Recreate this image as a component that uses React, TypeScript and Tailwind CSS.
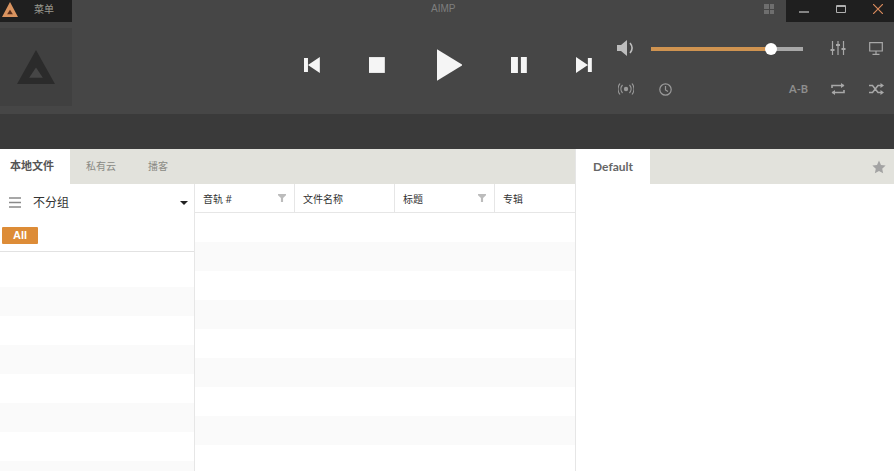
import React from "react";

const cjk = "font-['Open_Sans','Noto_Sans_CJK_SC',sans-serif]";

function Logo({ size, h, outer, inner }: { size: number; h: number; outer: string; inner: string }) {
  return (
    <svg width={size} height={h} viewBox="0 0 100 86" preserveAspectRatio="none">
      <path d="M50 0 L100 86 H0 Z" fill={outer} />
      <path d="M50 44 L68 70 H32 Z" fill={inner} />
    </svg>
  );
}

function Funnel() {
  return (
    <svg width="8" height="8" viewBox="0 0 9 9" className="shrink-0">
      <path d="M0 0 H9 V1.5 L5.7 4.5 V9 H3.3 V4.5 L0 1.5 Z" fill="#bcbcbc" />
    </svg>
  );
}

function HeaderCell({ label, width, filter, last }: { label: string; width: string; filter?: boolean; last?: boolean }) {
  return (
    <div className={`${width} h-full flex items-center justify-between pl-[8px] pr-[8px] ${last ? "" : "border-r border-[#e6e6e6]"}`}>
      <span className={`text-[10px] leading-[12px] mt-[2px] text-[#333] ${cjk}`}>{label}</span>
      {filter && <Funnel />}
    </div>
  );
}

function Rows({ count }: { count: number }) {
  return (
    <div className="flex-1 overflow-hidden">
      {Array.from({ length: count }).map((_, i) => (
        <div key={i} className={i % 2 === 0 ? "h-[29px] bg-white" : "h-[29px] bg-[#fafafa]"} />
      ))}
    </div>
  );
}

export default function App() {
  return (
    <div className={`w-[894px] h-[471px] overflow-hidden bg-white flex flex-col ${cjk}`}>
      {/* Player */}
      <div className="h-[114px] bg-[#464646] flex flex-col">
        <div className="h-[22px] flex">
          <div className="w-[72px] h-full bg-[#1f1f1f] flex items-center">
            <div className="ml-[2px] mb-[3px]">
              <Logo size={16} h={15} outer="#d9935f" inner="#5a2f1c" />
            </div>
            <span className="ml-[16px] mb-[3px] text-[10px] text-[#9a9a90]">菜单</span>
          </div>
          <span className="ml-[359px] pt-[2px] text-[10px] leading-[14px] text-[#7e7e7e] font-['Liberation_Sans',sans-serif]">AIMP</span>
          <div className="flex h-full ml-auto">
            <div className="mr-[12px] mt-[4px] grid grid-cols-2 gap-[1px] w-[10px] h-[10px]">
              <span className="bg-[#6e6e6e]" />
              <span className="bg-[#6e6e6e]" />
              <span className="bg-[#6e6e6e]" />
              <span className="bg-[#6e6e6e]" />
            </div>
            <div className="w-[108px] h-full bg-[#1f1f1f] flex items-start">
              <svg width="10" height="2" viewBox="0 0 10 2" className="ml-[13px] mt-[11px]">
                <path d="M0 1 H10" stroke="#b0b0b0" strokeWidth="1.4" />
              </svg>
              <svg width="10" height="8" viewBox="0 0 10 8" className="ml-[27px] mt-[5px]">
                <path d="M0.5 0.5 H9.5 V7.5 H0.5 Z M0.5 1.5 H9.5" fill="none" stroke="#b0b0b0" strokeWidth="1" />
              </svg>
              <svg width="10" height="10" viewBox="0 0 10 10" className="ml-[27px] mt-[4px]">
                <path d="M0 0 L10 10 M10 0 L0 10" stroke="#d98a5c" strokeWidth="1.2" />
              </svg>
            </div>
          </div>
        </div>
        <div className="flex-1 flex">
          <div className="w-[72px] h-[78px] mt-[6px] bg-[#404040] flex items-center justify-center">
            <Logo size={38} h={34} outer="#2b2b2b" inner="#464646" />
          </div>
          {/* Transport */}
          <div className="ml-[232px] w-[288px] h-[86px] flex items-center">
            <svg width="16" height="16" viewBox="0 0 16 16">
              <path d="M0 1 H4 V15 H0 Z M16 0 V16 L4 8 Z" fill="#f5f5f5" />
            </svg>
            <svg width="16" height="16" viewBox="0 0 16 16" className="ml-[49px]">
              <rect width="16" height="16" fill="#f5f5f5" />
            </svg>
            <svg width="26" height="32" viewBox="0 0 26 32" className="ml-[52px]">
              <path d="M0 0 L26 16 L0 32 Z" fill="#f5f5f5" />
            </svg>
            <svg width="16" height="16" viewBox="0 0 16 16" className="ml-[49px]">
              <path d="M0 0 H7 V16 H0 Z M10 0 H16 V16 H10 Z" fill="#f5f5f5" />
            </svg>
            <svg width="16" height="16" viewBox="0 0 16 16" className="ml-[49px]">
              <path d="M0 0 L12 8 L0 16 Z M12 1 H16 V15 H12 Z" fill="#f5f5f5" />
            </svg>
          </div>
          {/* Right controls */}
          <div className="ml-[25px] flex-1 flex flex-col">
            <div className="h-[22px] mt-[15px] flex items-center">
              <svg width="18" height="16" viewBox="0 0 18 16">
                <path d="M0 5 H4 L10 0 V16 L4 11 H0 Z" fill="#bdbdbd" />
                <path d="M13 3 C15.5 6 15.5 10 13 13" fill="none" stroke="#bdbdbd" strokeWidth="1.6" />
              </svg>
              <div className="relative ml-[16px] w-[152px] h-[4px] mt-[1px] bg-[#a8a8a8]">
                <div className="h-full w-[120px] bg-[#cf9350]" />
                <div className="absolute left-[114px] top-[-4px] w-[12px] h-[12px] rounded-full bg-white" />
              </div>
              <svg width="16" height="14" viewBox="0 0 16 14" className="ml-[27px]">
                <path d="M2.5 0 V14 M8 0 V14 M13.5 0 V14" stroke="#a8a8a8" strokeWidth="1.2" />
                <path d="M0.5 8 H4.5 V10 H0.5 Z M6 3 H10 V5 H6 Z M11.5 7 H15.5 V9 H11.5 Z" fill="#a8a8a8" />
              </svg>
              <svg width="14" height="13" viewBox="0 0 14 13" className="ml-[23px]">
                <path d="M0.7 0.7 H13.3 V9 H0.7 Z" fill="none" stroke="#a8a8a8" strokeWidth="1.2" />
                <path d="M7 9 V12 M3.5 12.4 H10.5" stroke="#a8a8a8" strokeWidth="1.2" />
              </svg>
            </div>
            <div className="h-[20px] mt-[20px] flex items-center">
              <svg width="16" height="12" viewBox="0 0 16 12" className="ml-[1px]">
                <circle cx="8" cy="6" r="2.2" fill="#9a9a9a" />
                <path d="M4.5 2 A6 6 0 0 0 4.5 10 M11.5 2 A6 6 0 0 1 11.5 10 M2 0.5 A9 9 0 0 0 2 11.5 M14 0.5 A9 9 0 0 1 14 11.5" fill="none" stroke="#9a9a9a" strokeWidth="1.2" />
              </svg>
              <svg width="13" height="13" viewBox="0 0 13 13" className="ml-[25px]">
                <circle cx="6.5" cy="6.5" r="5.7" fill="none" stroke="#9a9a9a" strokeWidth="1.2" />
                <path d="M6.5 3 V7 L9 8.5" fill="none" stroke="#9a9a9a" strokeWidth="1.2" />
              </svg>
              <span className="ml-[117px] w-[20px] text-[11px] font-bold text-[#8e8e8e] whitespace-nowrap font-['Lato',sans-serif]">A-B</span>
              <svg width="14" height="12" viewBox="0 0 14 12" className="ml-[22px]">
                <path d="M1 5 V2.5 H13 M13 7 V9.5 H1" fill="none" stroke="#a8a8a8" strokeWidth="1.6" />
                <path d="M10 0 L13.5 2.5 L10 5 Z M4 7 L0.5 9.5 L4 12 Z" fill="#a8a8a8" />
              </svg>
              <svg width="15" height="12" viewBox="0 0 15 12" className="ml-[24px]">
                <path d="M0 2.5 H3.5 L9 9.5 H12 M0 9.5 H3.5 L9 2.5 H12" fill="none" stroke="#a8a8a8" strokeWidth="1.5" />
                <path d="M11.5 0 L15 2.5 L11.5 5 Z M11.5 7 L15 9.5 L11.5 12 Z" fill="#a8a8a8" />
              </svg>
            </div>
          </div>
        </div>
      </div>
      <div className="h-[35px] bg-[#3a3a3a]" />

      {/* Content */}
      <div className="flex-1 flex min-h-0">
        <div className="w-[576px] flex flex-col border-r border-[#e6e6e6]">
          <div className="h-[35px] bg-[#e2e2dc] flex items-center text-[10px] text-[#8a8a84]">
            <div className="w-[70px] h-full bg-white flex items-center pl-[10px] text-[11px] text-[#555] font-semibold">本地文件</div>
            <span className="ml-[16px]">私有云</span>
            <span className="ml-[32px]">播客</span>
          </div>
          <div className="flex-1 flex min-h-0">
            <div className="w-[195px] flex flex-col border-r border-[#e6e6e6]">
              <div className="h-[37px] flex items-center pl-[9px] pr-[6px]">
                <svg width="12" height="11" viewBox="0 0 12 11">
                  <path d="M0 1 H12 M0 5.5 H12 M0 10 H12" stroke="#8a8a8a" strokeWidth="1.5" />
                </svg>
                <span className="ml-[12px] text-[12px] text-[#333]">不分组</span>
                <svg width="8" height="4" viewBox="0 0 8 4" className="ml-auto">
                  <path d="M0 0 H8 L4 4 Z" fill="#222" />
                </svg>
              </div>
              <div className="h-[31px] border-b border-[#e2e2e2] pl-[2px] pt-[6px]">
                <div className="w-[36px] h-[17px] bg-[#dd8c37] text-white text-[11px] font-bold flex items-center justify-center rounded-[1px] font-['Liberation_Sans',sans-serif]">All</div>
              </div>
              <div className="h-[6px]" />
              <Rows count={8} />
            </div>
            <div className="flex-1 flex flex-col min-w-0">
              <div className="h-[29px] shrink-0 flex border-b border-[#e6e6e6]">
                <HeaderCell label="音轨 #" width="w-[100px]" filter />
                <HeaderCell label="文件名称" width="w-[100px]" />
                <HeaderCell label="标题" width="w-[100px]" filter />
                <HeaderCell label="专辑" width="w-[80px]" last />
              </div>
              <Rows count={9} />
            </div>
          </div>
        </div>
        <div className="flex-1 flex flex-col">
          <div className="h-[35px] bg-[#e2e2dc] flex items-center justify-between pr-[8px]">
            <div className="w-[74px] h-full bg-white flex items-center justify-center text-[12px] font-bold text-[#666] font-['Lato',sans-serif]">Default</div>
            <svg width="14" height="14" viewBox="0 0 24 24">
              <path d="M12 1 L15.4 8.4 L23.4 9.3 L17.5 14.8 L19.1 22.8 L12 18.8 L4.9 22.8 L6.5 14.8 L0.6 9.3 L8.6 8.4 Z" fill="#a3a3a3" />
            </svg>
          </div>
        </div>
      </div>
    </div>
  );
}
